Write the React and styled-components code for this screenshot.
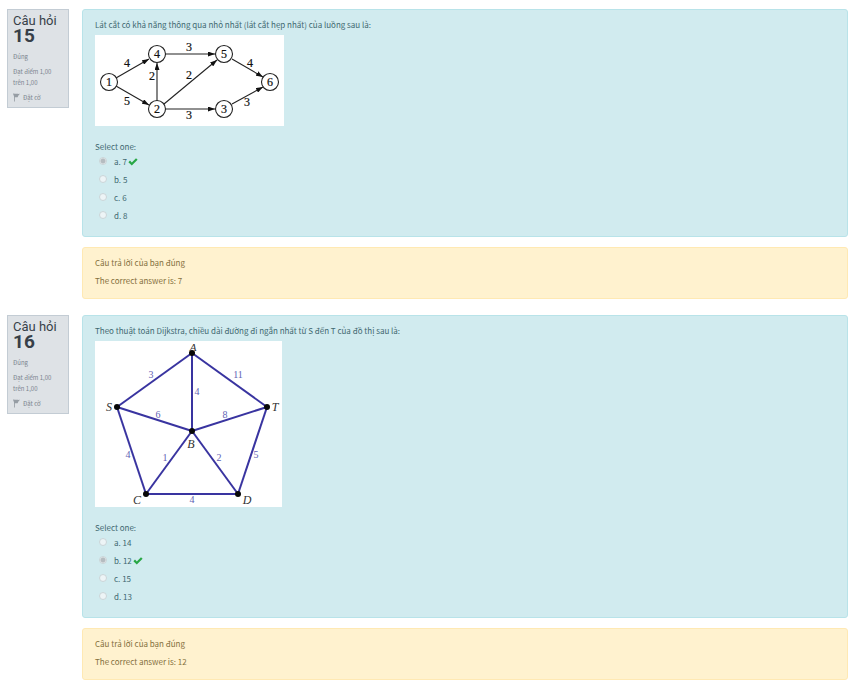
import React from "react";
import styled, { createGlobalStyle } from "styled-components";

const GlobalStyle = createGlobalStyle`
  *, *::before, *::after { box-sizing: border-box; }
  body {
    margin: 0;
    background: #fff;
    font-family: "Noto Sans CJK SC", "Noto Sans", sans-serif;
    font-size: 8px;
    line-height: 12px;
  }
`;

const Page = styled.main`
  display: flex;
  flex-direction: column;
  gap: 16px;
  padding: 9px 5px 7px 7px;
`;

const Question = styled.section`
  display: grid;
  grid-template-columns: 62px minmax(0, 1fr);
  column-gap: 13px;
  align-items: start;
`;

const Info = styled.aside`
  display: flex;
  flex-direction: column;
  gap: 4px;
  padding: 4px 5px;
  background: #dee2e6;
  border: 1px solid #c3ccd4;
  color: #7b848e;
  font-size: 6px;
  line-height: 11px;
`;

const Heading = styled.h3`
  margin: 0 0 3px;
  color: #373f48;
  font-family: Roboto, sans-serif;
  font-size: 13px;
  font-weight: 400;
  line-height: 14px;
  white-space: nowrap;
`;

const Number = styled.span`
  display: block;
  font-size: 19px;
  font-weight: 700;
  line-height: 16px;
`;

const InfoLine = styled.div``;

const FlagButton = styled.button`
  display: flex;
  align-items: center;
  gap: 3px;
  padding: 0;
  border: 0;
  background: none;
  color: inherit;
  font: inherit;
  cursor: pointer;
`;

const Content = styled.div`
  display: flex;
  flex-direction: column;
  gap: 10px;
  min-width: 0;
`;

const Panel = styled.div`
  padding: 9px 12px 11px;
  border: 1px solid;
  border-radius: 3px;
`;

const Formulation = styled(Panel)`
  background: #d1ebef;
  border-color: #b8e3e9;
  color: #3f6870;
`;

const Feedback = styled(Panel)`
  display: flex;
  flex-direction: column;
  gap: 6px;
  background: #fff2cf;
  border-color: #ffe9b3;
  color: #84703d;
`;

const Paragraph = styled.p`
  margin: 0;
`;

const Figure = styled.figure`
  margin: 4px 0 15px;
  svg { display: block; max-width: 100%; background: #fff; }
`;

const Choices = styled.fieldset`
  margin: 0;
  padding: 0;
  border: 0;
`;

const Legend = styled.legend`
  padding: 0;
`;

const Choice = styled.label`
  display: flex;
  align-items: center;
  height: 18px;
  padding-left: 4px;
`;

const Radio = styled.input`
  appearance: none;
  width: 8px;
  height: 8px;
  margin: 0 7px 2px 0;
  border: 1px solid #cbd5d8;
  border-radius: 50%;
  background: #edf4f6;
  &:checked { background: radial-gradient(circle, #b5bcc0 0 2px, #e5eaec 3px); }
`;

const Answer = styled.span`
  margin-right: 1px;
`;

function Flag() {
  return (
    <svg width="7" height="9" viewBox="0 0 7 9" aria-hidden="true">
      <path d="M1.5 1V8.5" stroke="#a3a9af" strokeWidth="1" />
      <path d="M0 .8C1 .2 2 1 3.2 .8C4.5 .6 5.5 1.2 7 .8L5.4 2.4L4.6 4.2C3.5 4.6 2.8 3.8 1.5 4.4Z" fill="#969da4" />
    </svg>
  );
}

function Check() {
  return (
    <svg width="10" height="8" viewBox="0 0 10 8" role="img" aria-label="Đúng">
      <path d="M.4 4.2L2 2.6L3.8 4.4L8 .3L9.6 1.8L3.8 7.5Z" fill="#28a745" />
    </svg>
  );
}

const flowNodes = [
  [14, 47, "1"], [62, 74, "2"], [129, 74, "3"],
  [62, 19, "4"], [129, 19, "5"], [175, 47, "6"],
];
const flowEdges = [
  [21, 43, 54, 24], [21, 51, 54, 70], [62, 66, 62, 28], [71, 19, 120, 19],
  [69, 69, 122, 25], [71, 74, 120, 74], [137, 24, 168, 42], [137, 69, 168, 52],
];
const flowLabels = [
  [32, 32, "4"], [32, 70, "5"], [57, 45, "2"], [94, 16, "3"],
  [94, 44, "2"], [94, 84, "3"], [155, 32, "4"], [152, 71, "3"],
];

function FlowNetwork() {
  return (
    <svg width="189" height="91" viewBox="0 0 189 91" role="img" aria-label="Mạng luồng"
      fontFamily='"Liberation Serif", serif' fontSize="12" textAnchor="middle" fill="#111">
      <defs>
        <marker id="arrow" viewBox="0 0 7 5" refX="7" refY="2.5" markerWidth="7" markerHeight="5"
          markerUnits="userSpaceOnUse" orient="auto">
          <path d="M0 0L7 2.5L0 5Z" fill="#111" />
        </marker>
      </defs>
      {flowEdges.map(([x1, y1, x2, y2]) => (
        <line key={`${x1}-${y1}-${y2}`} x1={x1} y1={y1} x2={x2} y2={y2}
          stroke="#222" strokeWidth="1.1" markerEnd="url(#arrow)" />
      ))}
      {flowNodes.map(([x, y, label]) => (
        <g key={label}>
          <circle cx={x} cy={y} r="8.5" fill="#fff" stroke="#222" strokeWidth="1.1" />
          <text x={x} y={y + 4} stroke="#111" strokeWidth=".2">{label}</text>
        </g>
      ))}
      {flowLabels.map(([x, y, label]) => (
        <text key={`${x}-${y}`} x={x} y={y} stroke="#111" strokeWidth=".2">{label}</text>
      ))}
    </svg>
  );
}

const points = {
  A: [97, 12], S: [22, 66], T: [172, 66], B: [97, 90], C: [51, 153], D: [143, 153],
};
const pointLabels = [
  [98, 10, "A"], [14, 70, "S"], [180, 70, "T"], [96, 107, "B"], [42, 163, "C"], [152, 163, "D"],
];
const weightedEdges = [
  ["S", "A", 56, 37, "3"], ["A", "T", 143, 37, "11"], ["A", "B", 102, 54, "4"],
  ["S", "B", 63, 77, "6"], ["B", "T", 130, 77, "8"], ["S", "C", 33, 117, "4"],
  ["B", "C", 70, 120, "1"], ["B", "D", 124, 120, "2"], ["T", "D", 161, 117, "5"],
  ["C", "D", 97, 162, "4"],
];

function WeightedGraph() {
  return (
    <svg width="187" height="166" viewBox="0 0 187 166" role="img" aria-label="Đồ thị có trọng số"
      fontFamily='"Liberation Serif", serif' textAnchor="middle">
      {weightedEdges.map(([from, to, x, y, weight]) => (
        <g key={from + to}>
          <line x1={points[from][0]} y1={points[from][1]} x2={points[to][0]} y2={points[to][1]}
            stroke="#3934a0" strokeWidth="2" />
          <text x={x} y={y} fontSize="10" fill="#6262b5">{weight}</text>
        </g>
      ))}
      {Object.entries(points).map(([name, [x, y]]) => (
        <circle key={name} cx={x} cy={y} r="3" fill="#080808" />
      ))}
      {pointLabels.map(([x, y, name]) => (
        <text key={name} x={x} y={y} fontSize={name === "A" ? 11 : 12} fontStyle="italic" fill="#333">{name}</text>
      ))}
    </svg>
  );
}

const questions = [
  {
    number: 15,
    text: "Lát cắt có khả năng thông qua nhỏ nhất (lát cắt hẹp nhất) của luồng sau là:",
    Drawing: FlowNetwork,
    answers: ["7", "5", "6", "8"],
    selected: 0,
  },
  {
    number: 16,
    text: "Theo thuật toán Dijkstra, chiều dài đường đi ngắn nhất từ S đến T của đồ thị sau là:",
    Drawing: WeightedGraph,
    answers: ["14", "12", "15", "13"],
    selected: 1,
  },
];

function QuestionBlock({ number, text, Drawing, answers, selected }) {
  return (
    <Question>
      <Info>
        <Heading>Câu hỏi <Number>{number}</Number></Heading>
        <InfoLine>Đúng</InfoLine>
        <InfoLine>Đạt điểm 1,00<br />trên 1,00</InfoLine>
        <FlagButton type="button"><Flag />Đặt cờ</FlagButton>
      </Info>
      <Content>
        <Formulation>
          <Paragraph>{text}</Paragraph>
          <Figure><Drawing /></Figure>
          <Choices>
            <Legend>Select one:</Legend>
            {answers.map((answer, index) => (
              <Choice key={answer}>
                <Radio type="radio" name={`question-${number}`} defaultChecked={index === selected} disabled />
                <Answer>{"abcd"[index]}. {answer}</Answer>
                {index === selected && <Check />}
              </Choice>
            ))}
          </Choices>
        </Formulation>
        <Feedback>
          <Paragraph>Câu trả lời của bạn đúng</Paragraph>
          <Paragraph>The correct answer is: {answers[selected]}</Paragraph>
        </Feedback>
      </Content>
    </Question>
  );
}

export default function App() {
  return (
    <>
      <GlobalStyle />
      <Page>
        {questions.map((question) => (
          <QuestionBlock key={question.number} {...question} />
        ))}
      </Page>
    </>
  );
}
